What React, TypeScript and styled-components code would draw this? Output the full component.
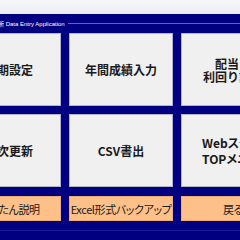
import React from "react";
import styled, { createGlobalStyle } from "styled-components";

const Global = createGlobalStyle`
  html, body { margin: 0; padding: 0; }
  body {
    width: 240px;
    height: 240px;
    overflow: hidden;
    background: #000080;
    font-family: "Noto Sans CJK JP", "Noto Sans", sans-serif;
  }
`;

const Screen = styled.div`
  width: 240px;
  height: 240px;
  overflow: hidden;
  display: flex;
  flex-direction: column;
  background: #000080;
`;

const TopStrip = styled.div`
  height: 14px;
  flex: none;
  background: linear-gradient(#f6f7f9, #eceef2);
`;

const CaptionRow = styled.div`
  height: 19px;
  flex: none;
  display: flex;
  align-items: center;
  gap: 3px;
  margin-left: -26px;
`;

const Caption = styled.span`
  color: #ffffff;
  font-size: 6px;
  white-space: nowrap;
  font-family: "Liberation Sans", "Noto Sans CJK JP", sans-serif;
`;

const FrameLine = styled.div`
  flex: 1;
  height: 1px;
  background: #5a64c0;
`;

const Grid = styled.div`
  margin-left: -43px;
  display: grid;
  grid-template-columns: repeat(3, 104px);
  grid-template-rows: 73px 73px;
  gap: 8px;
`;

const MainButton = styled.div<{ $align?: "left" | "center"; $lh?: number }>`
  background: #f0f0f0;
  border: 1px solid #b4b4c0;
  box-sizing: border-box;
  display: flex;
  align-items: center;
  justify-content: ${(p) => (p.$align === "left" ? "flex-start" : "center")};
  padding-left: ${(p) => (p.$align === "left" ? "20px" : "0")};
  text-align: ${(p) => p.$align ?? "center"};
  font-feature-settings: ${(p) => (p.$align === "left" ? '"palt"' : "normal")};
  font-weight: 700;
  font-size: 12px;
  line-height: ${(p) => p.$lh ?? 14}px;
  color: #1a1a1a;
  white-space: pre;
  overflow: hidden;
`;

const BottomRow = styled.div`
  margin-top: 9px;
  margin-left: -43px;
  display: grid;
  grid-template-columns: repeat(3, 104px);
  grid-template-rows: 25px;
  column-gap: 8px;
`;

const OrangeButton = styled.div`
  background: #fcc088;
  border: 1px solid #f0ad72;
  box-sizing: border-box;
  display: flex;
  align-items: center;
  justify-content: center;
  font-size: 11px;
  letter-spacing: -0.4px;
  font-feature-settings: "palt";
  color: #1a1a1a;
  white-space: nowrap;
  overflow: hidden;
`;

const BottomBand = styled.div`
  margin-top: 9px;
  height: 1px;
  background: #1c1c98;
`;

export default function App() {
  return (
    <>
      <Global />
      <Screen>
        <TopStrip />
        <CaptionRow>
          <Caption>データ更新 Data Entry Application</Caption>
          <FrameLine />
        </CaptionRow>
        <Grid>
          <MainButton>初期設定</MainButton>
          <MainButton>年間成績入力</MainButton>
          <MainButton $lh={13}>{"配当・\n利回り設定"}</MainButton>
          <MainButton>月次更新</MainButton>
          <MainButton>CSV書出</MainButton>
          <MainButton $align="left" $lh={16}>
            {"Webスクレイピング\nTOPメニュー"}
          </MainButton>
        </Grid>
        <BottomRow>
          <OrangeButton>かんたん説明</OrangeButton>
          <OrangeButton>Excel形式バックアップ</OrangeButton>
          <OrangeButton>戻る</OrangeButton>
        </BottomRow>
        <BottomBand />
      </Screen>
    </>
  );
}
